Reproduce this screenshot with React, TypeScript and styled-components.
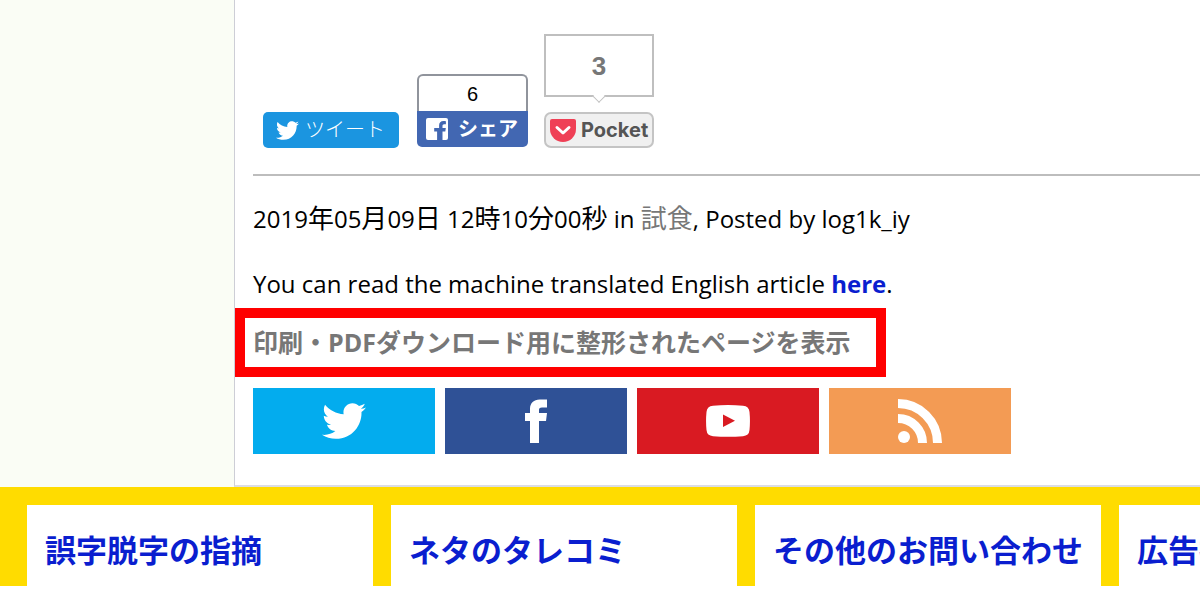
import React from "react";
import styled, { createGlobalStyle } from "styled-components";
import { FaTwitter } from "react-icons/fa";

const GlobalStyle = createGlobalStyle`
  *, *::before, *::after { box-sizing: border-box; }
  html { overflow: hidden; }
  body {
    margin: 0;
    background: #fff;
    color: #000;
    font-family: "Open Sans", "Noto Sans CJK JP", sans-serif;
    overflow-x: hidden;
  }
  a { text-decoration: none; }
  svg { display: block; flex: none; }
`;

const Columns = styled.div`
  display: grid;
  grid-template-columns: 234px minmax(0, 1fr);
  background: #fafdf5;
`;

const Article = styled.main`
  padding: 34px 0 31px 18px;
  border-left: 1px solid #cdced6;
  border-bottom: 2px solid #dcdde4;
  background: #fff;
`;

const ShareBar = styled.div`
  display: flex;
  align-items: flex-end;
  padding: 0 0 26px 10px;
  border-bottom: 2px solid #bdbdbd;
`;

const TweetLink = styled.a`
  display: flex;
  align-items: center;
  gap: 6px;
  width: 136px;
  height: 36px;
  margin-right: 18px;
  padding-left: 13px;
  border-radius: 5px;
  background: #1b95e0;
  color: #fff;
  font-size: 20px;
  font-weight: 300;
  line-height: 36px;
  white-space: nowrap;
`;

const FacebookShare = styled.div`
  width: 111px;
  margin-right: 16px;
  padding-bottom: 1px;
`;

const FacebookCount = styled.div`
  height: 37px;
  border: 2px solid #90949c;
  border-bottom: 0;
  border-radius: 6px 6px 0 0;
  font: 20px/36px "Liberation Sans", sans-serif;
  text-align: center;
`;

const FacebookLink = styled.a`
  display: flex;
  align-items: center;
  gap: 10px;
  height: 36px;
  padding-left: 9px;
  border-radius: 0 0 5px 5px;
  background: #4267b2;
  color: #fff;
  font-size: 20px;
  font-weight: 700;
  line-height: 36px;
  white-space: nowrap;
`;

const PocketShare = styled.div`
  display: flex;
  flex-direction: column;
  gap: 15px;
  width: 110px;
`;

const PocketCount = styled.div`
  position: relative;
  height: 63px;
  border: 2px solid #bfbfbf;
  color: #777;
  font: 700 26px/60px "Liberation Sans", sans-serif;
  text-align: center;

  &::after {
    content: "";
    position: absolute;
    left: 50%;
    bottom: -6px;
    width: 9px;
    height: 9px;
    border: solid #bfbfbf;
    border-width: 0 1px 1px 0;
    background: #fff;
    transform: translateX(-50%) rotate(45deg);
  }
`;

const PocketLink = styled.a`
  display: flex;
  align-items: center;
  gap: 5px;
  height: 36px;
  padding-left: 4px;
  border: 2px solid #c4c4c4;
  border-radius: 7px;
  background: #f0f0f0;
  color: #555;
  font: 700 20px/32px Inter, sans-serif;
`;

const Line = styled.p`
  margin: 0;
  padding-top: 25px;
  font-size: 24px;
  line-height: 36px;
  white-space: nowrap;

  & + & { padding-top: 29px; }
`;

const Kanji = styled.span`
  font-size: 26px;
  line-height: 1;
`;

const CategoryLink = styled.a`
  color: #777;
  font-size: 26px;
  line-height: 1;
`;

const HereLink = styled.a`
  color: #0a1ecf;
  font-weight: 700;
`;

const PrintFrame = styled.div`
  width: 651px;
  height: 69px;
  margin: 6px 0 11px -18px;
  padding: 6px 0 0 8px;
  border: 10px solid #f00;
`;

const PrintLink = styled.a`
  display: block;
  color: #777;
  font-size: 25px;
  font-weight: 700;
  line-height: 36px;
  white-space: nowrap;
`;

const SocialRow = styled.nav`
  display: flex;
  gap: 10px;
`;

const SocialLink = styled.a<{ $color: string }>`
  display: flex;
  align-items: center;
  justify-content: center;
  width: 182px;
  height: 66px;
  background: ${(p) => p.$color};
  color: #fff;
`;

const ContactBar = styled.footer`
  display: flex;
  gap: 18px;
  padding: 18px 0 0 27px;
  background: #ffdc00;
  overflow: hidden;
`;

const ContactCard = styled.a`
  flex: 0 0 346px;
  height: 81px;
  padding: 20px 0 0 18px;
  background: #fff;
  color: #0a1ecf;
  font-family: "Noto Sans CJK JP", sans-serif;
  font-size: 31px;
  font-weight: 700;
  line-height: 48px;
  white-space: nowrap;
`;

const FacebookSquare = () => (
  <svg width="22" height="22" viewBox="0 0 22 22" aria-hidden="true">
    <path
      fill="#fff"
      d="M2 0h18a2 2 0 0 1 2 2v18a2 2 0 0 1-2 2h-3.500v-8.500h2.800l.5-3.400h-3.300V8c0-1 .4-1.700 1.700-1.700h1.700V3.300c-.5-.1-1.400-.2-2.500-.2-2.700 0-4.300 1.600-4.300 4.500v2.500H8.200v3.400h2.900V22H2a2 2 0 0 1-2-2V2a2 2 0 0 1 2-2z"
    />
  </svg>
);

const PocketIcon = () => (
  <svg width="26" height="23" viewBox="0 0 26 23" aria-hidden="true">
    <path fill="#ef4056" d="M2 0h22a2 2 0 0 1 2 2v8a13 13 0 0 1-26 0V2a2 2 0 0 1 2-2z" />
    <path d="M7 8.500l6 5.500 6-5.500" fill="none" stroke="#fff" strokeWidth="3" strokeLinecap="round" strokeLinejoin="round" />
  </svg>
);

const FacebookIcon = () => (
  <svg width="22" height="44" viewBox="0 0 22 44" aria-hidden="true">
    <path
      fill="#fff"
      d="M5 44V22H0v-8h5V10C5 4 9 .5 14.500.5H22v8h-5c-2.500 0-3 1-3 2.500v3h8l-1 8h-7v22z"
    />
  </svg>
);

const YoutubeIcon = () => (
  <svg width="44" height="32" viewBox="0 0 44 32" aria-hidden="true">
    <path
      fill="#fff"
      fillRule="evenodd"
      d="M7 .8Q22-.6 37 .8q6 .5 6.500 6.200.9 9 0 18Q43 30.700 37 31.200q-15 1.200-30 0Q1 30.700.5 25q-.9-9 0-18Q1 1.300 7 .8zM17 9.500v12.600l12-6.300z"
    />
  </svg>
);

const RssIcon = () => (
  <svg width="44" height="44" viewBox="0 0 44 44" aria-hidden="true">
    <circle cx="6" cy="38" r="6" fill="#fff" />
    <path d="M0 19.500A24.500 24.500 0 0 1 24.500 44M0 4.500A39.500 39.500 0 0 1 39.500 44" fill="none" stroke="#fff" strokeWidth="9" />
  </svg>
);

const socials = [
  { name: "Twitter", color: "#03acee", icon: <FaTwitter size={44} /> },
  { name: "Facebook", color: "#2f5196", icon: <FacebookIcon /> },
  { name: "YouTube", color: "#d91a22", icon: <YoutubeIcon /> },
  { name: "RSS", color: "#f39b54", icon: <RssIcon /> },
];

const contacts = ["誤字脱字の指摘", "ネタのタレコミ", "その他のお問い合わせ", "広告掲載"];

export default function App() {
  return (
    <>
      <GlobalStyle />
      <Columns>
        <aside />
        <Article>
          <ShareBar>
            <TweetLink href="#tweet">
              <FaTwitter size={23} />
              ツイート
            </TweetLink>
            <FacebookShare>
              <FacebookCount>6</FacebookCount>
              <FacebookLink href="#share">
                <FacebookSquare />
                シェア
              </FacebookLink>
            </FacebookShare>
            <PocketShare>
              <PocketCount>3</PocketCount>
              <PocketLink href="#pocket">
                <PocketIcon />
                Pocket
              </PocketLink>
            </PocketShare>
          </ShareBar>
          <Line>
            2019<Kanji>年</Kanji>05<Kanji>月</Kanji>09<Kanji>日</Kanji> 12<Kanji>時</Kanji>10<Kanji>分</Kanji>00
            <Kanji>秒</Kanji> in <CategoryLink href="#category">試食</CategoryLink>, Posted by log1k_iy
          </Line>
          <Line>
            You can read the machine translated English article <HereLink href="#english">here</HereLink>.
          </Line>
          <PrintFrame>
            <PrintLink href="#print">印刷・PDFダウンロード用に整形されたページを表示</PrintLink>
          </PrintFrame>
          <SocialRow>
            {socials.map((s) => (
              <SocialLink key={s.name} href={`#${s.name}`} $color={s.color} aria-label={s.name}>
                {s.icon}
              </SocialLink>
            ))}
          </SocialRow>
        </Article>
      </Columns>
      <ContactBar>
        {contacts.map((label) => (
          <ContactCard key={label} href={`#${label}`}>
            {label}
          </ContactCard>
        ))}
      </ContactBar>
    </>
  );
}
